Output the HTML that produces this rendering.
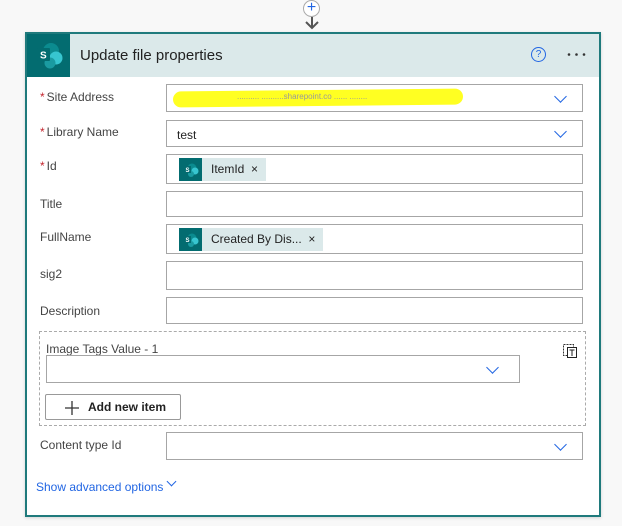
<!DOCTYPE html>
<html><head><style>
body{margin:0;width:643px;height:526px;background:#fff;font-family:"Liberation Sans",sans-serif;position:relative;overflow:hidden}
.bg{position:absolute;left:0;top:0;width:622px;height:526px;background:#f8f8f8}
.card{position:absolute;left:25px;top:32px;width:572px;height:481px;border:2px solid #1f7a7c;background:#fff;box-shadow:0 1px 3px rgba(0,0,0,.15)}
.hdr{position:absolute;left:0;top:0;width:572px;height:43px;background:#dbe9ea}
.ico{position:absolute;left:0;top:0;width:43px;height:43px;background:#036c70}
.title{position:absolute;left:53px;top:13px;font-size:15px;color:#222}
.lbl{position:absolute;left:13px;font-size:12px;color:#444}
.lbl b{color:#c4262e;font-weight:normal;margin-right:2px}
.in{position:absolute;left:139px;width:417px;border:1px solid #a6a6a6;background:#fff;box-sizing:border-box}
.chev{position:absolute;width:8px;height:8px;border-right:1.5px solid #2266e3;border-bottom:1.5px solid #2266e3;transform:rotate(45deg)}
.tok{position:absolute;left:12px;top:3px;height:23px;background:#dbe9ea;font-size:12px;color:#222;line-height:23px;padding-left:32px;padding-right:8px}
.tok svg{position:absolute;left:0;top:0}
</style></head><body>
<div class="bg"></div>
<div style="position:absolute;left:303px;top:0;width:17px;height:17px;border:1px solid #aaa;border-radius:50%;background:#fff;box-sizing:border-box;color:#2266e3;font-size:16px;line-height:13px;text-align:center">+</div>
<svg style="position:absolute;left:305px;top:17px" width="14" height="14"><path d="M1 5 L7 11 L13 5 M7 0 V11" stroke="#555" stroke-width="2" fill="none"/></svg>
<div class="card">
<div class="hdr"><div class="ico"><svg width="43" height="43"><circle cx="24" cy="17" r="8" fill="#0b8b8f"/><circle cx="29" cy="24" r="6.5" fill="#37c6d0"/><circle cx="23" cy="29" r="5.5" fill="#1a9ba1"/><rect x="10" y="14" width="13" height="13" rx="1" fill="#036c70"/><text x="13" y="24.5" font-size="10" font-weight="bold" fill="#fff" font-family="Liberation Sans">S</text></svg></div>
<div class="title">Update file properties</div>
<div style="position:absolute;left:504px;top:13px;width:13px;height:13px;border:1.5px solid #2266e3;border-radius:50%;color:#2266e3;font-size:10px;text-align:center;line-height:13px">?</div>
<svg style="position:absolute;left:540px;top:18px" width="20" height="5"><circle cx="2" cy="2.5" r="1.3" fill="#333"/><circle cx="9.5" cy="2.5" r="1.3" fill="#333"/><circle cx="17" cy="2.5" r="1.3" fill="#333"/></svg>
</div>
<div class="lbl" style="top:56px"><b>*</b>Site Address</div>
<div class="in" style="top:50px;height:28px"><div style="position:absolute;left:6px;top:5px;width:290px;height:16px;background:#ffff22;border-radius:8px;transform:rotate(-0.6deg)"></div><div style="position:absolute;left:70px;top:7px;font-size:8px;color:#999">.......... ..........sharepoint.co ...... ........</div><div class="chev" style="left:389px;top:7px"></div></div>
<div class="lbl" style="top:91px"><b>*</b>Library Name</div>
<div class="in" style="top:86px;height:27px;font-size:12px;padding:7px 10px;color:#222">test<div class="chev" style="left:389px;top:6px"></div></div>
<div class="lbl" style="top:125px"><b>*</b>Id</div>
<div class="in" style="top:120px;height:30px"><div class="tok"><svg width="23" height="23"><rect width="23" height="23" fill="#036c70"/><circle cx="13" cy="10" r="4.5" fill="#0b8b8f"/><circle cx="16" cy="13" r="3.5" fill="#37c6d0"/><circle cx="12" cy="16" r="3" fill="#1a9ba1"/><rect x="5" y="8" width="7" height="7" fill="#036c70"/><text x="6.5" y="14" font-size="6" font-weight="bold" fill="#fff">S</text></svg>ItemId &nbsp;×</div></div>
<div class="lbl" style="top:163px">Title</div>
<div class="in" style="top:157px;height:26px"></div>
<div class="lbl" style="top:196px">FullName</div>
<div class="in" style="top:190px;height:30px"><div class="tok"><svg width="23" height="23"><rect width="23" height="23" fill="#036c70"/><circle cx="13" cy="10" r="4.5" fill="#0b8b8f"/><circle cx="16" cy="13" r="3.5" fill="#37c6d0"/><circle cx="12" cy="16" r="3" fill="#1a9ba1"/><rect x="5" y="8" width="7" height="7" fill="#036c70"/><text x="6.5" y="14" font-size="6" font-weight="bold" fill="#fff">S</text></svg>Created By Dis... &nbsp;×</div></div>
<div class="lbl" style="top:233px">sig2</div>
<div class="in" style="top:227px;height:29px"></div>
<div class="lbl" style="top:270px">Description</div>
<div class="in" style="top:263px;height:27px"></div>
<div style="position:absolute;left:12px;top:297px;width:547px;height:95px;border:1px dashed #aaa;box-sizing:border-box"></div>
<div class="lbl" style="top:308px;left:19px">Image Tags Value - 1</div>
<svg style="position:absolute;left:535px;top:309px" width="16" height="16"><rect x="1.5" y="1.5" width="10" height="11" fill="none" stroke="#333" stroke-dasharray="2 1"/><rect x="5.5" y="4.5" width="9" height="10" fill="#fff" stroke="#222"/><path d="M7.5 7 H12.5 M10 7 V13" stroke="#222"/></svg>
<div class="in" style="left:19px;width:474px;top:321px;height:28px"><div class="chev" style="left:441px;top:7px"></div></div>
<div style="position:absolute;left:18px;top:360px;width:136px;height:26px;border:1px solid #999;border-radius:2px;box-sizing:border-box;font-size:12px;font-weight:bold;color:#222;line-height:24px;padding-left:42px">Add new item<svg style="position:absolute;left:18px;top:5px" width="16" height="16"><path d="M8 1V15M1 8H15" stroke="#333" stroke-width="1.3"/></svg></div>
<div class="lbl" style="top:404px">Content type Id</div>
<div class="in" style="top:398px;height:28px"><div class="chev" style="left:389px;top:7px"></div></div>
<div style="position:absolute;left:9px;top:446px;font-size:12px;color:#2266e3">Show advanced options</div>
<div class="chev" style="left:141px;top:444px;width:6px;height:6px;border-width:1px"></div>
</div>
</body></html>
